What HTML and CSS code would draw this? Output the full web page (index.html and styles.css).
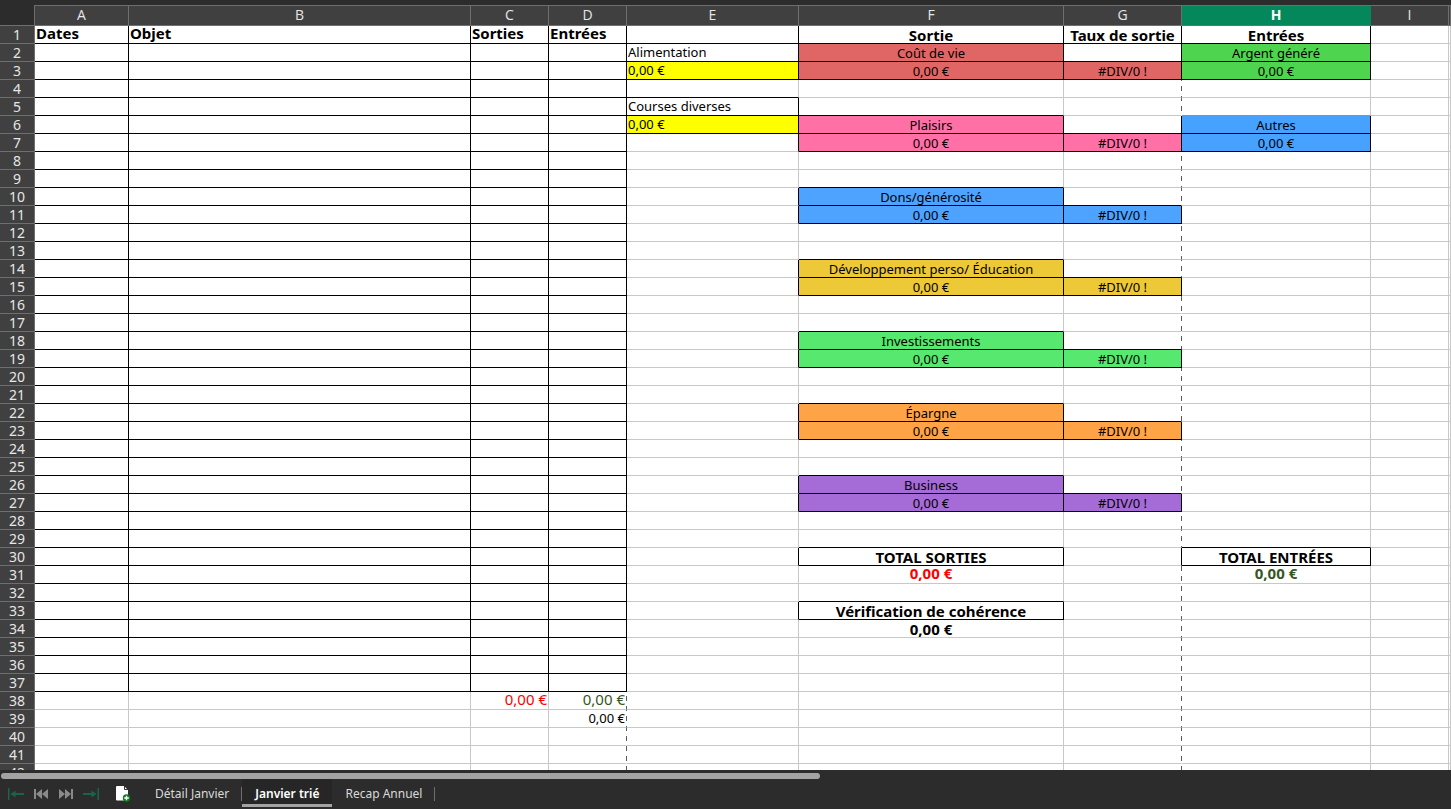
FILE: index.html
```
<!DOCTYPE html>
<html lang="fr">
<head>
<meta charset="utf-8">
<title>Budget - Janvier trié</title>
<link rel="stylesheet" href="styles.css">
</head>
<body>
<main class="sheet">
  <table class="grid">
    <colgroup>
      <col class="col-head"><col class="col-a"><col class="col-b"><col class="col-c"><col class="col-d"><col class="col-e"><col class="col-f"><col class="col-g"><col class="col-h"><col class="col-i"><col>
    </colgroup>
    <thead>
      <tr><td class="corner"></td><th scope="col">A</th><th scope="col">B</th><th scope="col">C</th><th scope="col">D</th><th scope="col">E</th><th scope="col">F</th><th scope="col">G</th><th scope="col" class="selected">H</th><th scope="col">I</th><th></th></tr>
    </thead>
    <tbody id="rows"></tbody>
  </table>
</main>
<footer class="bottom">
  <div class="scroll-track"><div class="scroll-thumb"></div></div>
  <nav class="tabbar" aria-label="Feuilles">
    <div class="tab-nav">
      <button class="icon-button first-last" aria-label="Première feuille"><svg width="16" height="12" viewBox="0 0 16 12"><path d="M0 0h1.500v12H0zM2.500 6l5-3.500V5H16v2H7.500v2.500z"/></svg></button>
      <button class="icon-button step" aria-label="Feuille précédente"><svg width="14" height="10" viewBox="0 0 14 10"><path d="M0 0h2v10H0zM8 0v10L2 5zM14 0v10L8 5z"/></svg></button>
      <button class="icon-button step" aria-label="Feuille suivante"><svg width="14" height="10" viewBox="0 0 14 10"><path d="M12 0h2v10h-2zM0 0v10l6-5zM6 0v10l6-5z"/></svg></button>
      <button class="icon-button first-last" aria-label="Dernière feuille"><svg width="16" height="12" viewBox="0 0 16 12"><path d="M14.500 0H16v12h-1.500zM13.500 6l-5-3.500V5H0v2h8.500v2.500z"/></svg></button>
    </div>
    <button class="add-sheet" aria-label="Ajouter une feuille"><svg width="16" height="16" viewBox="0 0 16 16"><path fill="#fff" d="M2 0h7l4 4v10.500H2a1 1 0 0 1-1-1V1a1 1 0 0 1 1-1z"/><path fill="none" stroke="#333" d="M9.500 0v3.500H13"/><circle cx="11.500" cy="12" r="3.700" fill="#0b7d1e"/><path stroke="#fff" stroke-width="1.400" d="M9.200 12h4.600M11.500 9.700v4.600"/></svg></button>
    <div class="tabs">
      <button class="tab">Détail Janvier</button>
      <button class="tab active">Janvier trié</button>
      <button class="tab">Recap Annuel</button>
    </div>
  </nav>
</footer>
<script src="sheet.js"></script>
</body>
</html>
```
FILE: sheet.js
```
const COLS = "ABCDEFGHIJ";
const ROWS = 42;
const cells = {};

function put(ref, text, classes) {
  cells[ref] = { text: text || "", classes: new Set((classes || "").split(" ").filter(Boolean)) };
}
function mark(ref, name) {
  if (!cells[ref]) put(ref);
  cells[ref].classes.add(name);
}
/* Frames a cell: its right and bottom edges, plus the edges of its left and upper neighbours. */
function frame(ref) {
  const col = COLS.indexOf(ref[0]);
  const row = Number(ref.slice(1));
  mark(ref, "edge-right");
  mark(ref, "edge-bottom");
  if (col > 0) mark(COLS[col - 1] + row, "edge-right");
  if (row > 1) mark(ref[0] + (row - 1), "edge-bottom");
}

put("A1", "Dates", "title high");
put("B1", "Objet", "title high");
put("C1", "Sorties", "title high");
put("D1", "Entrées", "title high");
put("F1", "Sortie", "title center low");
put("G1", "Taux de sortie", "title center low");
put("H1", "Entrées", "title center low");
put("E2", "Alimentation");
put("E3", "0,00 €", "yellow");
put("E5", "Courses diverses");
put("E6", "0,00 €", "yellow");

[
  [2, "Coût de vie", "red"],
  [6, "Plaisirs", "pink"],
  [10, "Dons/générosité", "blue"],
  [14, "Développement perso/ Éducation", "gold"],
  [18, "Investissements", "mint"],
  [22, "Épargne", "orange"],
  [26, "Business", "purple"],
].forEach(([row, label, color]) => {
  put("F" + row, label, "center " + color);
  put("F" + (row + 1), "0,00 €", "center " + color);
  put("G" + (row + 1), "#DIV/0 !", "center " + color);
});

put("H2", "Argent généré", "center green");
put("H3", "0,00 €", "center green");
put("H6", "Autres", "center azure");
put("H7", "0,00 €", "center azure");
put("F30", "TOTAL SORTIES", "title center low");
put("F31", "0,00 €", "title center high red-text");
put("H30", "TOTAL ENTRÉES", "title center low");
put("H31", "0,00 €", "title center high green-text");
put("F33", "Vérification de cohérence", "title center low");
put("F34", "0,00 €", "title center low");
put("C38", "0,00 €", "large right high red-text");
put("D38", "0,00 €", "large right high green-text");
put("D39", "0,00 €", "right");

for (let row = 1; row <= 37; row++) {
  for (const col of "ABCD") frame(col + row);
}
["E1", "E2", "E3", "E5", "E6", "F1", "G1", "H1", "G2", "H2", "H3", "H6", "H7",
 "F30", "H30", "F33"].forEach(frame);
[2, 6, 10, 14, 18, 22, 26].forEach((row) => {
  frame("F" + row);
  frame("F" + (row + 1));
  frame("G" + (row + 1));
});
cells.H5.classes.delete("edge-bottom");
mark("H5", "edge-azure");

const body = document.getElementById("rows");
for (let row = 1; row <= ROWS; row++) {
  const tr = document.createElement("tr");
  const th = document.createElement("th");
  th.scope = "row";
  th.textContent = row;
  tr.append(th);
  for (const col of COLS) {
    const td = document.createElement("td");
    const cell = cells[col + row];
    if (cell) {
      td.textContent = cell.text;
      td.className = [...cell.classes].join(" ");
    }
    if (col === "D" || col === "G") td.classList.add("page-break");
    tr.append(td);
  }
  body.append(tr);
}
```
FILE: styles.css
```
* { box-sizing: border-box; }
body {
  margin: 0;
  height: 100vh;
  display: flex;
  flex-direction: column;
  overflow: hidden;
  background: #2c2c2c;
  font-family: "Noto Sans", sans-serif;
  font-size: 13px;
  color: #000;
}
.sheet {
  --dash: repeating-linear-gradient(to bottom, transparent 0 1px, #5a5a5a 1px 6px, transparent 6px 10px);
  flex: 1;
  min-height: 0;
  overflow: hidden;
  border-top: 5px solid #2c2c2c;
  background:
    var(--dash) 626px 0 / 1px 100% no-repeat,
    var(--dash) 1181px 0 / 1px 100% no-repeat,
    #fff;
}
.grid {
  width: 100%;
  min-width: 1451px;
  table-layout: fixed;
  border-collapse: separate;
  border-spacing: 0;
}
.col-head { width: 35px; }
.col-a { width: 94px; }
.col-b { width: 342px; }
.col-c, .col-d, .col-i { width: 78px; }
.col-e { width: 172px; }
.col-f { width: 265px; }
.col-g { width: 118px; }
.col-h { width: 189px; }

th {
  padding: 0;
  background: #404040;
  color: #e6e6e6;
  font-size: 14px;
  font-weight: 400;
  border-right: 1px solid #6e6e6e;
  border-bottom: 1px solid #6e6e6e;
}
thead th {
  height: 21px;
  padding-bottom: 2px;
  border-top: 1px solid #6e6e6e;
  font-family: "Open Sans", sans-serif;
  line-height: 17px;
}
thead .corner {
  background: #2c2c2c;
  border-right: 1px solid #6e6e6e;
  border-bottom: 1px solid #6e6e6e;
}
thead .selected {
  background: #04875a;
  border-right-color: #04875a;
  color: #fff;
  font-weight: 700;
}
tbody th { height: 18px; line-height: 17px; }
td {
  height: 18px;
  padding: 0 1px;
  line-height: 17px;
  white-space: nowrap;
  vertical-align: top;
  border-right: 1px solid #c8c8c8;
  border-bottom: 1px solid #c8c8c8;
}
.page-break { border-right-color: transparent; }
.edge-right { border-right-color: #000; }
.edge-bottom { border-bottom-color: #000; }
.edge-azure { border-bottom-color: #47a1ff; }
.page-break.edge-right { border-right-color: #000; }

.title { font-size: 15px; font-weight: 700; }
.large { font-size: 15px; }
.center { padding-top: 2px; line-height: 15px; text-align: center; }
.right { text-align: right; }
.high { padding-top: 0; line-height: 15px; }
.low { padding-top: 2px; line-height: 15px; }

.yellow { background: #ff0; }
.red { background: #e06666; }
.pink { background: #ff70a6; }
.blue { background: #4da3ff; }
.azure { background: #47a1ff; }
.gold { background: #edc937; }
.mint { background: #57e86f; }
.orange { background: #ffa347; }
.purple { background: #a56bd6; }
.green { background: #4fd44f; }
.red-text { color: #f00; }
.green-text { color: #375623; }

.bottom { background: #2c2c2c; }
.scroll-track { padding: 3px 1px 0; }
.scroll-thumb { width: 56.500%; height: 6px; border-radius: 3px; background: #a3a3a3; }
.tabbar { display: flex; align-items: center; height: 30px; }
button {
  padding: 0;
  border: 0;
  background: none;
  font: inherit;
  color: #dadada;
}
.tab-nav { display: flex; padding-left: 3px; }
.icon-button { display: flex; align-items: center; justify-content: center; width: 25px; height: 24px; }
.first-last { fill: #1c6349; }
.step { fill: #8a8a8a; }
.add-sheet { display: flex; margin-left: 12px; }
.tabs { display: flex; align-self: stretch; margin-left: 11px; }
.tab { position: relative; height: 28px; padding: 0 13px; font-size: 12px; }
.tab::after { content: ""; position: absolute; right: 0; top: 8px; width: 1px; height: 14px; background: #6e6e6e; }
.tab.active { background: #262626; box-shadow: inset 0 -3px #a3a3a3; font-weight: 600; color: #fff; }
.tab.active::after { content: none; }
```
